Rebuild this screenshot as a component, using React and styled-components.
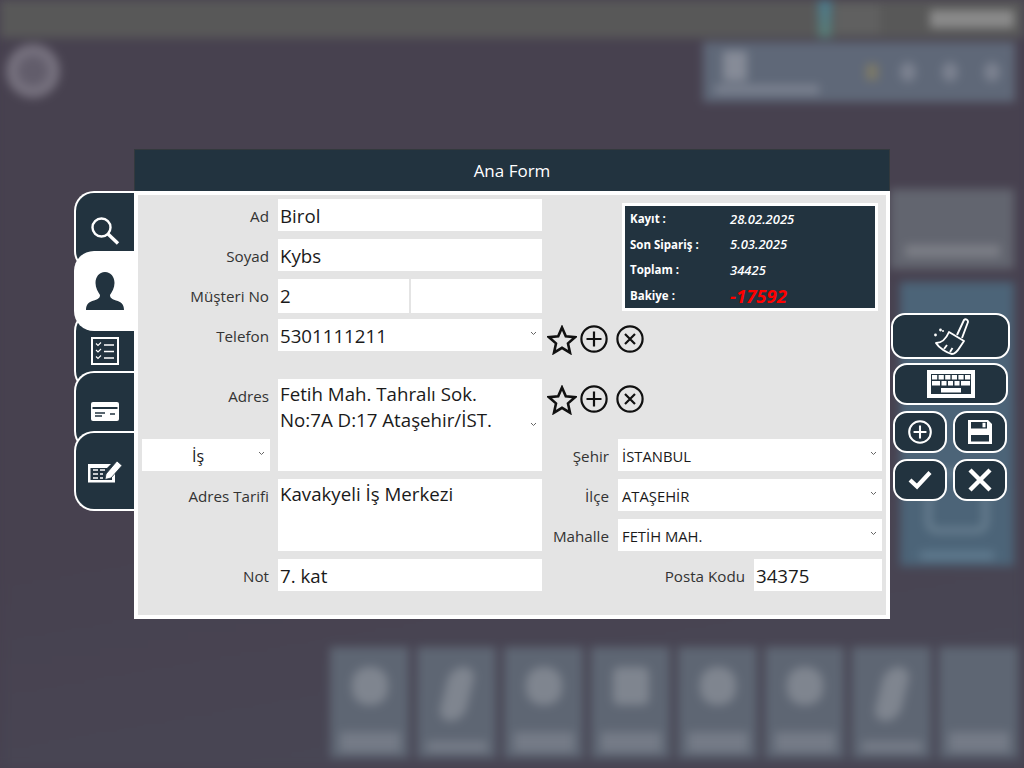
import React from "react";
import styled, { createGlobalStyle } from "styled-components";

const dark = "#22333f";

const GlobalStyle = createGlobalStyle`
	html, body {
		margin: 0;
		padding: 0;
		background: #47414f;
	}
	* {
		box-sizing: border-box;
	}
`;

const Stage = styled.div`
	position: relative;
	width: 1024px;
	height: 768px;
	overflow: hidden;
	background: #47414f;
	font-family: "Open Sans", "Liberation Sans", sans-serif;
`;

/* blurred page behind the dialog */
const Backdrop = styled.div`
	display: flex;
	flex-direction: column;
	height: 768px;
	filter: blur(5px);
	background: linear-gradient(170deg, #47414f 0%, #47414f 60%, #484856 100%);
`;

const TopBar = styled.div`
	display: flex;
	justify-content: flex-end;
	align-items: center;
	height: 38px;
	padding-right: 10px;
	background: #585858;
`;

const BarStreak = styled.div`
	width: 14px;
	height: 38px;
	margin-right: 4px;
	background: linear-gradient(180deg, #4d7a8c, #5a7a72);
`;

const BarShade = styled.div`
	width: 44px;
	height: 30px;
	margin-right: 50px;
	background: #606060;
`;

const BarLabel = styled.div`
	width: 84px;
	height: 18px;
	background: #8a8a8a;
`;

const BackRow = styled.div`
	display: flex;
	justify-content: space-between;
	align-items: flex-start;
	padding: 4px 9px 0 6px;
`;

const Logo = styled.div`
	width: 54px;
	height: 54px;
	margin-top: 2px;
	border-radius: 50%;
	border: 12px solid #75707d;
	background: #625d6b;
`;

const InfoPanel = styled.div`
	display: flex;
	align-items: center;
	width: 312px;
	height: 60px;
	padding: 0 15px 0 12px;
	background: #5f6878;
`;

const PanelBrand = styled.div`
	display: flex;
	flex-direction: column;
	align-items: flex-start;
	gap: 4px;
	margin-right: auto;
`;

const BrandIcon = styled.div`
	width: 24px;
	height: 30px;
	margin-left: 8px;
	background: #868b97;
`;

const BrandCaption = styled.div`
	width: 104px;
	height: 9px;
	background: #7c8290;
`;

const PanelSpot = styled.div`
	width: 12px;
	height: 16px;
	margin-right: 22px;
	background: #7d7a68;
`;

const PanelDot = styled.div`
	width: 16px;
	height: 20px;
	margin-left: ${(props) => (props.$first ? 0 : 26)}px;
	border-radius: 50%;
	background: #7c8290;
`;

const SideTiles = styled.div`
	display: flex;
	flex-direction: column;
	align-items: flex-end;
	gap: 13px;
	margin-top: 87px;
	padding-right: 10px;
`;

const GreyTile = styled.div`
	display: flex;
	align-items: flex-end;
	justify-content: center;
	width: 124px;
	height: 80px;
	padding-bottom: 12px;
	background: #62656f;
`;

const TileBand = styled.div`
	width: 95px;
	height: 12px;
	background: #7c7e86;
`;

const BlueTile = styled.div`
	display: flex;
	flex-direction: column;
	align-items: center;
	justify-content: flex-end;
	gap: 18px;
	width: 114px;
	height: 284px;
	padding-bottom: 6px;
	background: #4c6478;
`;

const BlueIcon = styled.div`
	width: 62px;
	height: 62px;
	border: 5px solid #6f8595;
	border-radius: 10px;
`;

const BlueCaption = styled.div`
	width: 74px;
	height: 9px;
	background: #5f7a8e;
`;

const BottomTiles = styled.div`
	display: flex;
	gap: 8px;
	margin: auto 6px 10px auto;
`;

const BottomTile = styled.div`
	display: flex;
	flex-direction: column;
	align-items: center;
	justify-content: space-between;
	width: 79px;
	height: 111px;
	padding: 20px 0 6px;
	background: #5e6673;
`;

const TileIcon = styled.div`
	width: ${(props) => (props.$tall ? 26 : 36)}px;
	height: ${(props) => (props.$tall ? 54 : 38)}px;
	border-radius: ${(props) => (props.$square ? 6 : 16)}px;
	background: #7f858f;
	transform: ${(props) => (props.$tall ? "skewX(-14deg)" : "none")};
`;

const TileCaption = styled.div`
	width: 60px;
	height: ${(props) => (props.$tall ? 20 : 11)}px;
	background: #757b87;
`;

/* the dialog */
const Dialog = styled.div`
	position: absolute;
	top: 149px;
	left: 74px;
	display: flex;
	align-items: flex-start;
`;

const Tabs = styled.div`
	display: flex;
	flex-direction: column;
	width: 60px;
	margin-top: 42px;
`;

const Tab = styled.div`
	position: relative;
	z-index: ${(props) => (props.$active ? 5 : 1)};
	display: flex;
	align-items: center;
	justify-content: center;
	height: 80px;
	margin-top: ${(props) => (props.$first ? 0 : -20)}px;
	border: 2px solid #fff;
	border-right: 0;
	border-radius: 20px 0 0 20px;
	background: ${(props) => (props.$active ? "#fff" : dark)};
`;

const Main = styled.div`
	width: 756px;
`;

const Header = styled.div`
	height: 42px;
	border: 1px solid #33393d;
	border-bottom: 0;
	background: ${dark};
	color: #fff;
	font-size: 17px;
	line-height: 42px;
	text-align: center;
`;

const Panel = styled.div`
	height: 428px;
	border: 4px solid #fff;
	padding: 4px;
	background: #e4e4e4;
`;

const Form = styled.div`
	display: grid;
	grid-template-columns: 128px 264px 60px 264px;
	grid-auto-rows: 12px;
	column-gap: 8px;
	row-gap: 8px;
`;

const Label = styled.div`
	grid-column: ${(props) => props.$col || 1};
	grid-row: ${(props) => props.$row} / span 2;
	padding-right: 1px;
	color: #333;
	font-size: 15.2px;
	line-height: 35px;
	text-align: right;
	white-space: nowrap;
`;

const Field = styled.div`
	position: relative;
	grid-column: ${(props) => props.$col || 2};
	grid-row: ${(props) => props.$row} / span ${(props) => props.$span || 2};
	padding: 0 2px;
	background: #fff;
	color: #1a1a1a;
	font-size: 18.7px;
	line-height: 34px;
	white-space: nowrap;
`;

const AddressText = styled.div`
	line-height: 26px;
	padding-top: 2px;
`;

const SplitField = styled.div`
	grid-column: 2;
	grid-row: ${(props) => props.$row} / span 2;
	display: grid;
	grid-template-columns: 131px 131px;
	gap: 2px;
`;

const SplitCell = styled.div`
	padding: 0 2px;
	background: #fff;
	color: #1a1a1a;
	font-size: 18.7px;
	line-height: 34px;
`;

const Select = styled.div`
	grid-column: ${(props) => props.$col || 4};
	grid-row: ${(props) => props.$row} / span 2;
	position: relative;
	padding-left: ${(props) => props.$indent || 4}px;
	background: #fff;
	color: #1a1a1a;
	font-size: ${(props) => props.$size || 14.8}px;
	line-height: 34px;
`;

const Chevron = styled.svg`
	position: absolute;
	right: 5px;
	top: ${(props) => props.$top || 12}px;
	width: 7px;
	height: 5px;
	fill: none;
	stroke: #666;
	stroke-width: 1;
`;

const IconRow = styled.div`
	grid-column: 3 / span 2;
	grid-row: ${(props) => props.$row} / span 2;
	display: flex;
	align-items: flex-start;
	margin: 6px 0 0 -3px;
`;

const IconGap = styled.span`
	width: ${(props) => props.$w}px;
`;

const StatBox = styled.div`
	grid-column: 4;
	grid-row: 1 / span 6;
	display: grid;
	grid-template-columns: 100px 1fr;
	grid-auto-rows: 25.5px;
	align-items: center;
	height: 108px;
	margin: 4px 4px 0;
	padding: 0 5px;
	border: 3px solid #fff;
	background: ${dark};
	color: #fff;
	font-size: 11.5px;
	font-weight: 700;
`;

const StatValue = styled.div`
	font-style: italic;
	font-weight: 600;
	font-size: 13px;
`;

const Balance = styled(StatValue)`
	color: #f00;
	font-size: 18.5px;
	font-weight: 700;
`;

const PostalRow = styled.div`
	grid-column: 3 / span 2;
	grid-row: ${(props) => props.$row} / span 2;
	display: flex;
	justify-content: flex-end;
	gap: 9px;
`;

const PostalLabel = styled.div`
	color: #333;
	font-size: 15.2px;
	line-height: 35px;
`;

const PostalInput = styled.div`
	width: 128px;
	padding: 0 2px;
	background: #fff;
	color: #1a1a1a;
	font-size: 18.7px;
	line-height: 34px;
`;

const Actions = styled.div`
	display: flex;
	flex-direction: column;
	align-items: flex-start;
	margin: 164px 0 0 1px;
`;

const ActionRow = styled.div`
	display: flex;
	gap: 6px;
	margin: 6px 0 0 2px;
`;

const ActionButton = styled.button`
	display: flex;
	align-items: center;
	justify-content: center;
	width: ${(props) => props.$w || 54}px;
	height: ${(props) => props.$h || 42}px;
	margin: ${(props) => props.$margin || 0};
	padding: 0;
	border: 2px solid #fff;
	border-radius: 14px;
	background: ${dark};
`;

const ChevronIcon = (props) => (
	<Chevron viewBox="0 0 7 5" {...props}>
		<path d="M1 1 L3.5 3.5 L6 1" />
	</Chevron>
);

const StarIcon = () => (
	<svg width="30" height="30" viewBox="0 0 30 30" fill="none" stroke="#111" strokeWidth="2.6">
		<path d="M15 2.5 L18.8 11.3 L28 12.2 L21 18.4 L23 27.7 L15 22.8 L7 27.7 L9 18.4 L2 12.2 L11.2 11.3 Z" />
	</svg>
);

const CirclePlus = ({ color = "#111", size = 28, sw = 2.2 }) => (
	<svg width={size} height={size} viewBox="0 0 28 28" fill="none" stroke={color} strokeWidth={sw}>
		<circle cx="14" cy="14" r="12.6" />
		<path d="M14 6.5 V21.5 M6.5 14 H21.5" />
	</svg>
);

const CircleX = () => (
	<svg width="28" height="28" viewBox="0 0 28 28" fill="none" stroke="#111" strokeWidth="2.2">
		<circle cx="14" cy="14" r="12.6" />
		<path d="M9 9 L19 19 M19 9 L9 19" />
	</svg>
);

const RowIcons = () => (
	<>
		<StarIcon />
		<IconGap $w={3} />
		<CirclePlus />
		<IconGap $w={8} />
		<CircleX />
	</>
);

const SearchIcon = () => (
	<svg width="30" height="30" viewBox="0 0 30 30" fill="none" stroke="#fff">
		<circle cx="11.5" cy="11.5" r="9" strokeWidth="2.4" />
		<path d="M18 18 L28 27.5" strokeWidth="3.4" />
	</svg>
);

const UserIcon = () => (
	<svg width="38" height="38" viewBox="0 0 38 38" fill={dark}>
		<path d="M19 0 C25 0 28.5 5 28.5 11 C28.5 16 26 20 24 23 C24 26 26 27 30 28.5 C35 30 38 32 38 38 L0 38 C0 32 3 30 8 28.5 C12 27 14 26 14 23 C12 20 9.5 16 9.5 11 C9.5 5 13 0 19 0 Z" />
	</svg>
);

const ListIcon = () => (
	<svg width="28" height="28" viewBox="0 0 28 28" fill="none" stroke="#fff">
		<rect x="1" y="1" width="26" height="26" strokeWidth="2" />
		<path d="M5 6.5 l2 2 l3 -3 M5 13 l2 2 l3 -3 M5 19.5 l2 2 l3 -3" strokeWidth="1.1" />
		<path d="M13 8 H23 M13 14.5 H23 M13 21 H23" strokeWidth="1.4" />
	</svg>
);

const CardIcon = () => (
	<svg width="28" height="19" viewBox="0 0 28 19">
		<rect x="0" y="0" width="28" height="19" rx="2" fill="#fff" />
		<rect x="1.5" y="5" width="25" height="2" fill={dark} />
		<path d="M4 11 H14 M4 14 H11 M19 12 H24" stroke={dark} strokeWidth="1.5" />
	</svg>
);

const EditIcon = () => (
	<svg width="36" height="24" viewBox="0 0 36 24">
		<path d="M1 5 H24 L20 9 H3.5 V21 H25 V15 L28 12 V23.5 H1 Z" fill="#fff" />
		<path d="M6 11 H11 M13 11 H18 M6 15 H11 M13 15 H16 M6 19 H11 M13 19 H16" stroke="#fff" strokeWidth="1.6" />
		<path d="M19 15 L30 2 L35 6.5 L24 19 L18 20.5 Z" fill="#fff" stroke={dark} strokeWidth="0.8" />
	</svg>
);

const BroomIcon = () => (
	<svg width="36" height="38" viewBox="0 0 36 38" fill="none" stroke="#fff" strokeWidth="1.9" strokeLinejoin="round">
		<path d="M24 18 L31 3 a2.4 2.4 0 0 1 4 2 L29 21" />
		<path d="M16 15 L31 24 L27 30 C24 35 21 37 19 37 C14 36 6 31 3 26 C8 26 13 22 16 15 Z" />
		<path d="M11 32 l3 -4 M17 35 l2.5 -4" />
		<circle cx="2.5" cy="18" r="1.4" fill="#fff" stroke="none" />
		<circle cx="7.5" cy="13" r="1.4" fill="#fff" stroke="none" />
		<circle cx="10" cy="14" r="1" fill="#fff" stroke="none" />
	</svg>
);

const KeyboardIcon = () => {
	const topKeys = [0, 1, 2, 3, 4, 5];
	const midKeys = [
		[5, 8],
		[14.5, 5],
		[21, 5],
		[27.5, 5],
		[34, 9],
	];
	return (
		<svg width="48" height="28" viewBox="0 0 48 28">
			<rect width="48" height="28" fill="#fff" />
			<rect x="4" y="4" width="40" height="20" fill={dark} />
			{topKeys.map((i) => (
				<rect key={i} x={5 + i * 6.6} y="5" width="5.2" height="4.5" fill="#fff" />
			))}
			{midKeys.map(([x, w]) => (
				<rect key={x} x={x} y="11" width={w} height="4.5" fill="#fff" />
			))}
			<rect x="14" y="18" width="20" height="4.5" fill="#fff" />
		</svg>
	);
};

const SaveIcon = () => (
	<svg width="24" height="24" viewBox="0 0 24 24">
		<path d="M0 0 H20 L24 4 V24 H0 Z" fill="#fff" />
		<rect x="3" y="2" width="16" height="6.5" fill={dark} />
		<rect x="14.5" y="2.8" width="3" height="4.5" fill="#fff" />
		<rect x="3" y="15" width="18" height="6.5" fill={dark} />
	</svg>
);

const CheckIcon = () => (
	<svg width="24" height="20" viewBox="0 0 24 20" fill="none" stroke="#fff" strokeWidth="4.2">
		<path d="M2 10 L9 16.5 L22 2.5" />
	</svg>
);

const CloseIcon = () => (
	<svg width="24" height="24" viewBox="0 0 24 24" fill="none" stroke="#fff" strokeWidth="4.4">
		<path d="M2 2 L22 22 M22 2 L2 22" />
	</svg>
);

const bottomTiles = [
	{ id: 1 },
	{ id: 2, tall: true },
	{ id: 3 },
	{ id: 4, square: true },
	{ id: 5 },
	{ id: 6 },
	{ id: 7, tall: true },
	{ id: 8, empty: true },
];

const App = () => (
	<Stage>
		<GlobalStyle />
		<Backdrop aria-hidden="true">
			<TopBar>
				<BarStreak />
				<BarShade />
				<BarLabel />
			</TopBar>
			<BackRow>
				<Logo />
				<InfoPanel>
					<PanelBrand>
						<BrandIcon />
						<BrandCaption />
					</PanelBrand>
					<PanelSpot />
					<PanelDot $first />
					<PanelDot />
					<PanelDot />
				</InfoPanel>
			</BackRow>
			<SideTiles>
				<GreyTile>
					<TileBand />
				</GreyTile>
				<BlueTile>
					<BlueIcon />
					<BlueCaption />
				</BlueTile>
			</SideTiles>
			<BottomTiles>
				{bottomTiles.map((tile) => (
					<BottomTile key={tile.id}>
						{tile.empty ? <span /> : <TileIcon $tall={tile.tall} $square={tile.square} />}
						<TileCaption $tall={!tile.tall} />
					</BottomTile>
				))}
			</BottomTiles>
		</Backdrop>

		<Dialog>
			<Tabs>
				<Tab $first>
					<SearchIcon />
				</Tab>
				<Tab $active>
					<UserIcon />
				</Tab>
				<Tab>
					<ListIcon />
				</Tab>
				<Tab>
					<CardIcon />
				</Tab>
				<Tab>
					<EditIcon />
				</Tab>
			</Tabs>

			<Main>
				<Header>Ana Form</Header>
				<Panel>
					<Form>
						<Label $row={1}>Ad</Label>
						<Field $row={1}>Birol</Field>
						<StatBox>
							<div>Kayıt :</div>
							<StatValue>28.02.2025</StatValue>
							<div>Son Sipariş :</div>
							<StatValue>5.03.2025</StatValue>
							<div>Toplam :</div>
							<StatValue>34425</StatValue>
							<div>Bakiye :</div>
							<Balance>-17592</Balance>
						</StatBox>

						<Label $row={3}>Soyad</Label>
						<Field $row={3}>Kybs</Field>

						<Label $row={5}>Müşteri No</Label>
						<SplitField $row={5}>
							<SplitCell>2</SplitCell>
							<SplitCell />
						</SplitField>

						<Label $row={7}>Telefon</Label>
						<Field $row={7}>
							5301111211
							<ChevronIcon />
						</Field>
						<IconRow $row={7}>
							<RowIcons />
						</IconRow>

						<Label $row={10}>Adres</Label>
						<Field $row={10} $span={5}>
							<AddressText>
								Fetih Mah. Tahralı Sok.
								<br />
								No:7A D:17 Ataşehir/İST.
							</AddressText>
							<ChevronIcon $top={43} />
						</Field>
						<IconRow $row={10}>
							<RowIcons />
						</IconRow>

						<Select $col={1} $row={13} $indent={50} $size={16}>
							İş
							<ChevronIcon />
						</Select>
						<Label $col={3} $row={13}>
							Şehir
						</Label>
						<Select $row={13}>
							İSTANBUL
							<ChevronIcon />
						</Select>

						<Label $row={15}>Adres Tarifi</Label>
						<Field $row={15} $span={4}>
							<AddressText>Kavakyeli İş Merkezi</AddressText>
						</Field>
						<Label $col={3} $row={15}>
							İlçe
						</Label>
						<Select $row={15}>
							ATAŞEHİR
							<ChevronIcon />
						</Select>

						<Label $col={3} $row={17}>
							Mahalle
						</Label>
						<Select $row={17}>
							FETİH MAH.
							<ChevronIcon />
						</Select>

						<Label $row={19}>Not</Label>
						<Field $row={19}>7. kat</Field>
						<PostalRow $row={19}>
							<PostalLabel>Posta Kodu</PostalLabel>
							<PostalInput>34375</PostalInput>
						</PostalRow>
					</Form>
				</Panel>
			</Main>

			<Actions>
				<ActionButton $w={119} $h={46}>
					<BroomIcon />
				</ActionButton>
				<ActionButton $w={115} $h={42} $margin="4px 0 0 2px">
					<KeyboardIcon />
				</ActionButton>
				<ActionRow>
					<ActionButton>
						<CirclePlus color="#fff" size={24} sw={2.4} />
					</ActionButton>
					<ActionButton>
						<SaveIcon />
					</ActionButton>
				</ActionRow>
				<ActionRow>
					<ActionButton>
						<CheckIcon />
					</ActionButton>
					<ActionButton>
						<CloseIcon />
					</ActionButton>
				</ActionRow>
			</Actions>
		</Dialog>
	</Stage>
);

export default App;
